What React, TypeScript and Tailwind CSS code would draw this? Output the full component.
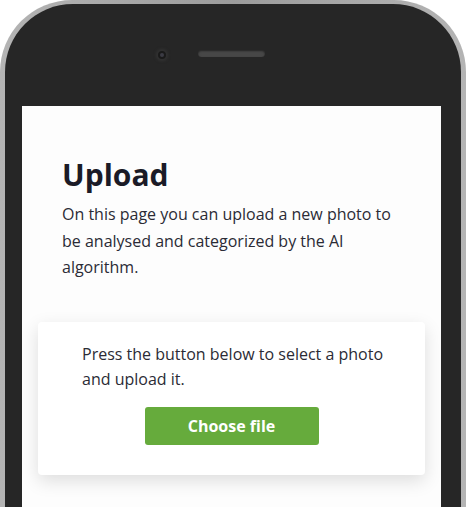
import React from 'react';

const FONT = { fontFamily: '"Open Sans", "Noto Sans", Arial, sans-serif' };

function PhoneTop() {
  return (
    <div className="flex h-[102px] items-start justify-center pt-[46px]">
      <div className="mt-[1px] h-[8px] w-[8px] rounded-full bg-[#1a1a1a] shadow-[0_0_3px_2px_rgba(60,60,60,0.6)]">
        <div className="m-[2px] h-[4px] w-[4px] rounded-full bg-[#3b3b44]" />
      </div>
      <div className="ml-[32px] h-[7px] w-[67px] rounded-full bg-[#474747] shadow-[inset_0_1px_2px_rgba(0,0,0,0.5)]" />
      <div className="w-[40px]" />
    </div>
  );
}

export default function App() {
  return (
    <div className="h-[507px] w-[468px] overflow-hidden bg-white" style={FONT}>
      <div className="w-[466px] rounded-t-[72px] bg-gradient-to-r from-[#b4b4b4] via-[#9c9c9c] to-[#b4b4b4] px-[5px] pt-[4px]">
        <div className="h-[520px] rounded-t-[68px] bg-[#262626] pl-[17px] pr-[20px]">
          <PhoneTop />
          <div className="h-[420px] bg-[#fdfdfd] pt-[48px]">
            <div className="px-[40px]">
              <h1 className="text-[30px] leading-[42px] font-bold text-[#1b1b27]">Upload</h1>
              <p className="mt-[5px] text-[16px] leading-[26.5px] text-[#2b2b35]">
                On this page you can upload a new photo to be analysed and categorized by the AI algorithm.
              </p>
            </div>
            <div className="mx-[16px] mt-[41px] rounded-[4px] bg-white pt-[20px] pb-[30px] shadow-[0_6px_18px_rgba(0,0,0,0.13)]">
              <p className="pl-[44px] pr-[20px] text-[16px] leading-[25px] text-[#2b2b35]">
                Press the button below to select a photo and upload it.
              </p>
              <div className="mt-[15px] flex justify-center">
                <button className="h-[38px] w-[174px] rounded-[3px] bg-[#66ab3c] text-[16px] font-bold text-white">
                  Choose file
                </button>
              </div>
            </div>
          </div>
        </div>
      </div>
    </div>
  );
}
